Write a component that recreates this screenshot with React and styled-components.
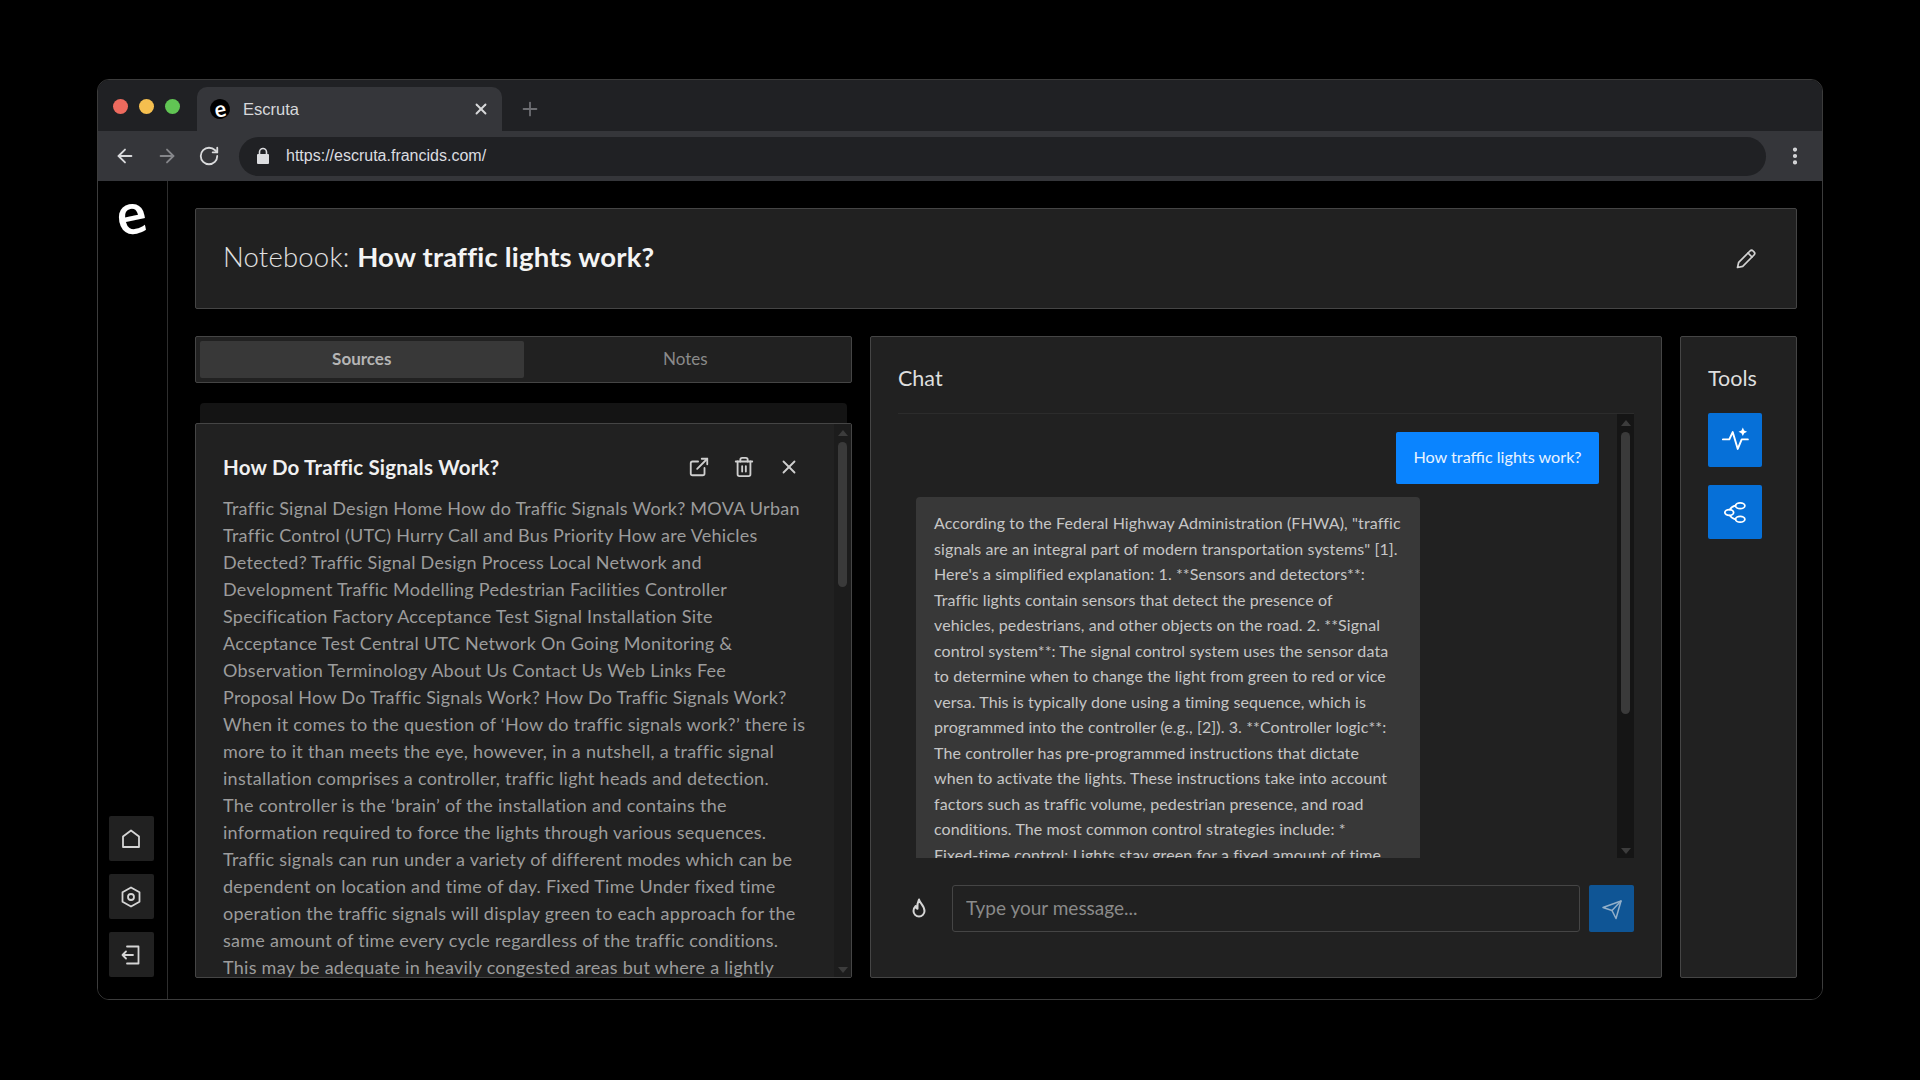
import React from 'react';
import styled, { createGlobalStyle } from 'styled-components';
import { ExternalLink, Trash2, X, Plus, ArrowLeft, ArrowRight, RotateCw, EllipsisVertical } from 'lucide-react';

const GlobalStyle = createGlobalStyle`
  html, body { margin: 0; padding: 0; background: #000; }
  body { font-family: Lato, "Open Sans", sans-serif; overflow: hidden; }
  * { box-sizing: border-box; }
`;

const Page = styled.div`
  width: 1920px;
  height: 1080px;
  padding: 79px 0 0 97px;
  background: #000;
`;

const Window = styled.div`
  width: 1726px;
  height: 921px;
  display: flex;
  flex-direction: column;
  border: 1px solid #3c3c3c;
  border-radius: 12px;
  overflow: hidden;
`;

const TabStrip = styled.div`
  height: 51px;
  flex: none;
  display: flex;
  align-items: flex-end;
  background: #202124;
  padding-left: 15px;
`;

const Lights = styled.div`
  display: flex;
  gap: 11px;
  align-self: flex-start;
  margin-top: 19px;
  width: 84px;
`;

const Light = styled.span`
  width: 15px;
  height: 15px;
  border-radius: 50%;
  background: ${({ $color }) => $color};
`;

const BrowserTab = styled.div`
  width: 305px;
  height: 44px;
  display: flex;
  align-items: center;
  background: #35363a;
  border-radius: 10px 10px 0 0;
  padding: 0 12px 0 13px;
  color: #d7d8da;
  font: 16.5px "Liberation Sans", sans-serif;
`;

const Favicon = styled.span`
  width: 20px;
  height: 20px;
  border-radius: 50%;
  background: #000;
  color: #fff;
  display: flex;
  align-items: center;
  justify-content: center;
  font: 600 21px/18px "Open Sans", sans-serif;
  margin-right: 13px;
  transform: rotate(-12deg);
`;

const TabName = styled.span`
  flex: 1;
`;

const NewTab = styled.span`
  display: flex;
  align-self: center;
  margin: 6px 0 0 17px;
  color: #6d6e72;
`;

const AddressBar = styled.div`
  height: 50px;
  flex: none;
  display: flex;
  align-items: center;
  background: #35363a;
  padding: 0 16px 0 16px;
`;

const NavButton = styled.span`
  display: flex;
  width: 42px;
  color: ${({ $dim }) => ($dim ? '#85868a' : '#d9dadc')};
`;

const UrlPill = styled.div`
  width: 1527px;
  height: 39px;
  margin-left: -1px;
  display: flex;
  align-items: center;
  gap: 16px;
  padding-left: 17px;
  background: #202124;
  border-radius: 20px;
  color: #dcdde0;
  font: 16px "Liberation Sans", sans-serif;
`;

const LockBody = styled.svg`
  flex: none;
  color: #dcdde0;
`;

const Kebab = styled.span`
  display: flex;
  margin-left: 18px;
  color: #d9dadc;
`;

const AppBody = styled.div`
  flex: 1;
  min-height: 0;
  display: flex;
  background: #000;
`;

const Sidebar = styled.nav`
  width: 70px;
  flex: none;
  display: flex;
  flex-direction: column;
  align-items: center;
  justify-content: space-between;
  border-right: 1px solid #2e2e2e;
  padding: 5px 3px 22px 0;
`;

const Logo = styled.div`
  color: #fff;
  font: 600 54px/54px "Open Sans", sans-serif;
  transform: rotate(-12deg);
`;

const SideButtons = styled.div`
  display: flex;
  flex-direction: column;
  gap: 13px;
`;

const SideButton = styled.button`
  width: 45px;
  height: 45px;
  padding: 0;
  border: none;
  border-radius: 2px;
  background: #212121;
  color: #d5d5d5;
  display: flex;
  align-items: center;
  justify-content: center;
`;

const Main = styled.main`
  flex: 1;
  min-width: 0;
  display: flex;
  flex-direction: column;
  gap: 27px;
  padding: 27px 25px 21px 27px;
`;

const Panel = styled.section`
  background: #212121;
  border: 1px solid #454545;
  border-radius: 2px;
`;

const Header = styled(Panel)`
  height: 101px;
  flex: none;
  display: flex;
  align-items: center;
  justify-content: space-between;
  padding: 0 38px 4px 27px;
`;

const NotebookTitle = styled.h1`
  margin: 0;
  color: #e2e2e2;
  font-size: 27.5px;
  font-weight: 300;
  letter-spacing: 0.2px;

  strong {
    color: #f4f4f4;
    font-weight: 700;
  }
`;

const IconButton = styled.span`
  display: flex;
  margin-top: 4px;
  color: #d2d2d2;
`;

const Columns = styled.div`
  flex: 1;
  min-height: 0;
  display: flex;
`;

const SourcesColumn = styled.div`
  width: 657px;
  flex: none;
  display: flex;
  flex-direction: column;
`;

const Tabs = styled(Panel)`
  height: 47px;
  flex: none;
  display: flex;
  padding: 4px;
`;

const TabItem = styled.div`
  flex: 1;
  display: flex;
  align-items: center;
  justify-content: center;
  padding-bottom: 2px;
  border-radius: 2px;
  font-size: 17px;
  font-weight: ${({ $active }) => ($active ? 700 : 400)};
  color: ${({ $active }) => ($active ? '#b5b5b5' : '#8a8a8a')};
  background: ${({ $active }) => ($active ? '#383838' : 'transparent')};
`;

const PeekCard = styled.div`
  height: 20px;
  flex: none;
  margin: 20px 5px 0;
  background: #141414;
  border-radius: 4px 4px 0 0;
`;

const SourceCard = styled(Panel)`
  flex: 1;
  min-height: 0;
  display: flex;
`;

const SourceContent = styled.div`
  flex: 1;
  min-width: 0;
  overflow: hidden;
  padding: 29px 0 0 27px;
`;

const SourceHead = styled.div`
  display: flex;
  align-items: center;
  justify-content: space-between;
  padding-right: 34px;
  margin-bottom: 14px;
`;

const SourceTitle = styled.h2`
  margin: 0;
  color: #f0f0f0;
  font-size: 20.5px;
  line-height: 28px;
  font-weight: 700;
  letter-spacing: 0.2px;
`;

const SourceActions = styled.div`
  display: flex;
  gap: 23px;
  color: #cfcfcf;
`;

const SourceText = styled.div`
  color: #9c9c9c;
  font-size: 18px;
  line-height: 27px;
  letter-spacing: 0.27px;
`;

const Line = styled.div`
  white-space: nowrap;
`;

const Track = styled.div`
  width: 17px;
  flex: none;
  display: flex;
  flex-direction: column;
  align-items: center;
  background: ${({ $dark }) => ($dark ? '#151515' : '#1c1c1c')};
  padding: 6px 0 4px;
`;

const Arrow = styled.span`
  width: 0;
  height: 0;
  flex: none;
  border-left: 5px solid transparent;
  border-right: 5px solid transparent;
  ${({ $down }) => ($down ? 'border-top' : 'border-bottom')}: 6px solid #3c3c3c;
`;

const Thumb = styled.div`
  width: 9px;
  height: ${({ $h }) => $h}px;
  margin-top: 6px;
  background: #3a3a3a;
  border-radius: 5px;
`;

const TrackGap = styled.div`
  flex: 1;
`;

const ChatPanel = styled(Panel)`
  width: 792px;
  flex: none;
  margin-left: 18px;
  display: flex;
  flex-direction: column;
  padding: 0 27px 45px;
`;

const SectionTitle = styled.h3`
  margin: 0;
  height: 76px;
  padding-top: 6px;
  flex: none;
  display: flex;
  align-items: center;
  color: #dedede;
  font-size: 21.5px;
  font-weight: 400;
`;

const Conversation = styled.div`
  flex: 1;
  min-height: 0;
  display: flex;
  border-top: 1px solid #2c2c2c;
`;

const Messages = styled.div`
  flex: 1;
  min-width: 0;
  overflow: hidden;
  display: flex;
  flex-direction: column;
  padding: 18px 18px 0 18px;
`;

const UserBubble = styled.div`
  align-self: flex-end;
  width: 203px;
  height: 52px;
  flex: none;
  display: flex;
  align-items: center;
  justify-content: center;
  padding-bottom: 3px;
  background: #0a84ff;
  border-radius: 2px;
  color: #e8f3ff;
  font-size: 16.2px;
`;

const BotBubble = styled.div`
  width: 504px;
  flex: none;
  margin-top: 13px;
  padding: 13px 0 0 18px;
  background: #383838;
  border-radius: 4px 4px 0 0;
  color: #c6c6c6;
  font-size: 16px;
  line-height: 25.5px;
  letter-spacing: 0.1px;
`;

const Composer = styled.div`
  height: 47px;
  flex: none;
  margin-top: 27px;
  display: flex;
  align-items: center;
`;

const FlameSlot = styled.span`
  width: 42px;
  margin-right: 12px;
  display: flex;
  justify-content: center;
  color: #d5d5d5;
`;

const MessageInput = styled.input`
  width: 628px;
  height: 47px;
  padding: 0 13px 2px;
  background: transparent;
  border: 1px solid #454545;
  border-radius: 3px;
  color: #ddd;
  font: 19px Lato, sans-serif;

  &::placeholder {
    color: #8a8a8a;
  }
`;

const SendButton = styled.button`
  width: 45px;
  height: 47px;
  margin-left: 9px;
  padding: 0;
  border: none;
  border-radius: 2px;
  background: #0f5595;
  color: #93afc9;
  display: flex;
  align-items: center;
  justify-content: center;
`;

const ToolsPanel = styled(Panel)`
  flex: 1;
  margin-left: 18px;
  padding: 0 27px;
`;

const ToolButton = styled.button`
  width: 54px;
  height: 54px;
  margin-bottom: 18px;
  padding: 0;
  border: none;
  border-radius: 2px;
  background: #0670d8;
  color: #fff;
  display: flex;
  align-items: center;
  justify-content: center;
`;

const sourceLines = [
  'Traffic Signal Design Home How do Traffic Signals Work? MOVA Urban',
  'Traffic Control (UTC) Hurry Call and Bus Priority How are Vehicles',
  'Detected? Traffic Signal Design Process Local Network and',
  'Development Traffic Modelling Pedestrian Facilities Controller',
  'Specification Factory Acceptance Test Signal Installation Site',
  'Acceptance Test Central UTC Network On Going Monitoring &',
  'Observation Terminology About Us Contact Us Web Links Fee',
  'Proposal How Do Traffic Signals Work? How Do Traffic Signals Work?',
  'When it comes to the question of ‘How do traffic signals work?’ there is',
  'more to it than meets the eye, however, in a nutshell, a traffic signal',
  'installation comprises a controller, traffic light heads and detection.',
  'The controller is the ‘brain’ of the installation and contains the',
  'information required to force the lights through various sequences.',
  'Traffic signals can run under a variety of different modes which can be',
  'dependent on location and time of day. Fixed Time Under fixed time',
  'operation the traffic signals will display green to each approach for the',
  'same amount of time every cycle regardless of the traffic conditions.',
  'This may be adequate in heavily congested areas but where a lightly',
];

const answerLines = [
  'According to the Federal Highway Administration (FHWA), "traffic',
  'signals are an integral part of modern transportation systems" [1].',
  "Here's a simplified explanation: 1. **Sensors and detectors**:",
  'Traffic lights contain sensors that detect the presence of',
  'vehicles, pedestrians, and other objects on the road. 2. **Signal',
  'control system**: The signal control system uses the sensor data',
  'to determine when to change the light from green to red or vice',
  'versa. This is typically done using a timing sequence, which is',
  'programmed into the controller (e.g., [2]). 3. **Controller logic**:',
  'The controller has pre-programmed instructions that dictate',
  'when to activate the lights. These instructions take into account',
  'factors such as traffic volume, pedestrian presence, and road',
  'conditions. The most common control strategies include: *',
  'Fixed-time control: Lights stay green for a fixed amount of time',
];

const Svg = ({ size = 24, width = 1.8, children }) => (
  <svg width={size} height={size} viewBox="0 0 24 24" fill="none" stroke="currentColor" strokeWidth={width} strokeLinecap="round" strokeLinejoin="round">
    {children}
  </svg>
);

const HomeIcon = () => (
  <Svg><path d="M4 20V9.500L12 3.500l8 6V20z" /></Svg>
);

const SettingsIcon = () => (
  <Svg>
    <path d="M12 2.500l8.500 4.800v9.400L12 21.500l-8.500-4.800V7.300z" />
    <circle cx="12" cy="12" r="3" />
  </Svg>
);

const ExitIcon = () => (
  <Svg>
    <path d="M8 3.500h11.500v17H8" />
    <path d="M14 12H3.500M7 8.500L3.500 12 7 15.500" />
  </Svg>
);

const PencilIcon = () => (
  <Svg size={24} width={1.7}>
    <path d="M3.500 20.500l1.200-5.200L16 4a2.200 2.200 0 0 1 3.100 0l.9.9a2.200 2.200 0 0 1 0 3.100L8.700 19.300z" />
    <path d="M14 6l4 4" />
  </Svg>
);

const FlameIcon = () => (
  <Svg size={24} width={2}>
    <path d="M12 2.500c.5 3.500 5.500 6 5.500 11.500a5.500 5.500 0 0 1-11 0c0-2.200 1-3.800 2.200-5 .1 1.700.8 2.600 1.800 2.800C10 8.500 10.500 5.500 12 2.500z" />
  </Svg>
);

const SendIcon = () => (
  <Svg size={24} width={1.5}>
    <path d="M3 10.500L21 4l-5 17.500-4-8z" />
    <path d="M12 13.500L21 4" />
  </Svg>
);

const PulseIcon = () => (
  <Svg size={27} width={1.7}>
    <path d="M.8 11h5.700l3-6.500L14 19.500 17.500 11H23" />
    <path d="M18.500.5l1.200 2.600 2.600 1.200-2.600 1.200-1.200 2.600-1.200-2.600-2.600-1.200 2.600-1.200z" fill="currentColor" stroke="none" />
  </Svg>
);

const ShareIcon = () => (
  <Svg size={25} width={1.7}>
    <ellipse cx="16.500" cy="5.500" rx="4.500" ry="2.800" />
    <ellipse cx="6" cy="12" rx="4.200" ry="2.800" />
    <ellipse cx="16.500" cy="18.500" rx="4.500" ry="2.800" />
    <path d="M12 5.500C9 6 7.500 7.500 6.500 9.200M6.500 14.800C7.500 16.500 9 18 12 18.500" />
  </Svg>
);

const LockIcon = () => (
  <LockBody width="14" height="18" viewBox="0 0 14 18">
    <rect x="1" y="7" width="12" height="10" rx="1" fill="currentColor" />
    <path d="M3.500 7.500V5a3.500 3.500 0 0 1 7 0v2.500" fill="none" stroke="currentColor" strokeWidth="1.600" />
  </LockBody>
);

const App = () => (
  <>
    <GlobalStyle />
    <Page>
      <Window>
        <TabStrip>
          <Lights>
            <Light $color="#ed6a5e" />
            <Light $color="#f5bf4f" />
            <Light $color="#61c554" />
          </Lights>
          <BrowserTab>
            <Favicon>e</Favicon>
            <TabName>Escruta</TabName>
            <X size={18} strokeWidth={2.5} />
          </BrowserTab>
          <NewTab><Plus size={22} /></NewTab>
        </TabStrip>
        <AddressBar>
          <NavButton><ArrowLeft size={22} /></NavButton>
          <NavButton $dim><ArrowRight size={22} /></NavButton>
          <NavButton><RotateCw size={22} /></NavButton>
          <UrlPill>
            <LockIcon />
            <span>https://escruta.francids.com/</span>
          </UrlPill>
          <Kebab><EllipsisVertical size={22} strokeWidth={2.6} /></Kebab>
        </AddressBar>
        <AppBody>
          <Sidebar>
            <Logo>e</Logo>
            <SideButtons>
              <SideButton><HomeIcon /></SideButton>
              <SideButton><SettingsIcon /></SideButton>
              <SideButton><ExitIcon /></SideButton>
            </SideButtons>
          </Sidebar>
          <Main>
            <Header>
              <NotebookTitle>Notebook: <strong>How traffic lights work?</strong></NotebookTitle>
              <IconButton><PencilIcon /></IconButton>
            </Header>
            <Columns>
              <SourcesColumn>
                <Tabs>
                  <TabItem $active>Sources</TabItem>
                  <TabItem>Notes</TabItem>
                </Tabs>
                <PeekCard />
                <SourceCard>
                  <SourceContent>
                    <SourceHead>
                      <SourceTitle>How Do Traffic Signals Work?</SourceTitle>
                      <SourceActions>
                        <ExternalLink size={22} />
                        <Trash2 size={22} />
                        <X size={22} />
                      </SourceActions>
                    </SourceHead>
                    <SourceText>
                      {sourceLines.map((line) => <Line key={line}>{line}</Line>)}
                    </SourceText>
                  </SourceContent>
                  <Track>
                    <Arrow />
                    <Thumb $h={145} />
                    <TrackGap />
                    <Arrow $down />
                  </Track>
                </SourceCard>
              </SourcesColumn>
              <ChatPanel>
                <SectionTitle>Chat</SectionTitle>
                <Conversation>
                  <Messages>
                    <UserBubble>How traffic lights work?</UserBubble>
                    <BotBubble>
                      {answerLines.map((line) => <Line key={line}>{line}</Line>)}
                    </BotBubble>
                  </Messages>
                  <Track $dark>
                    <Arrow />
                    <Thumb $h={282} />
                    <TrackGap />
                    <Arrow $down />
                  </Track>
                </Conversation>
                <Composer>
                  <FlameSlot><FlameIcon /></FlameSlot>
                  <MessageInput placeholder="Type your message..." />
                  <SendButton><SendIcon /></SendButton>
                </Composer>
              </ChatPanel>
              <ToolsPanel>
                <SectionTitle>Tools</SectionTitle>
                <ToolButton><PulseIcon /></ToolButton>
                <ToolButton><ShareIcon /></ToolButton>
              </ToolsPanel>
            </Columns>
          </Main>
        </AppBody>
      </Window>
    </Page>
  </>
);

export default App;
